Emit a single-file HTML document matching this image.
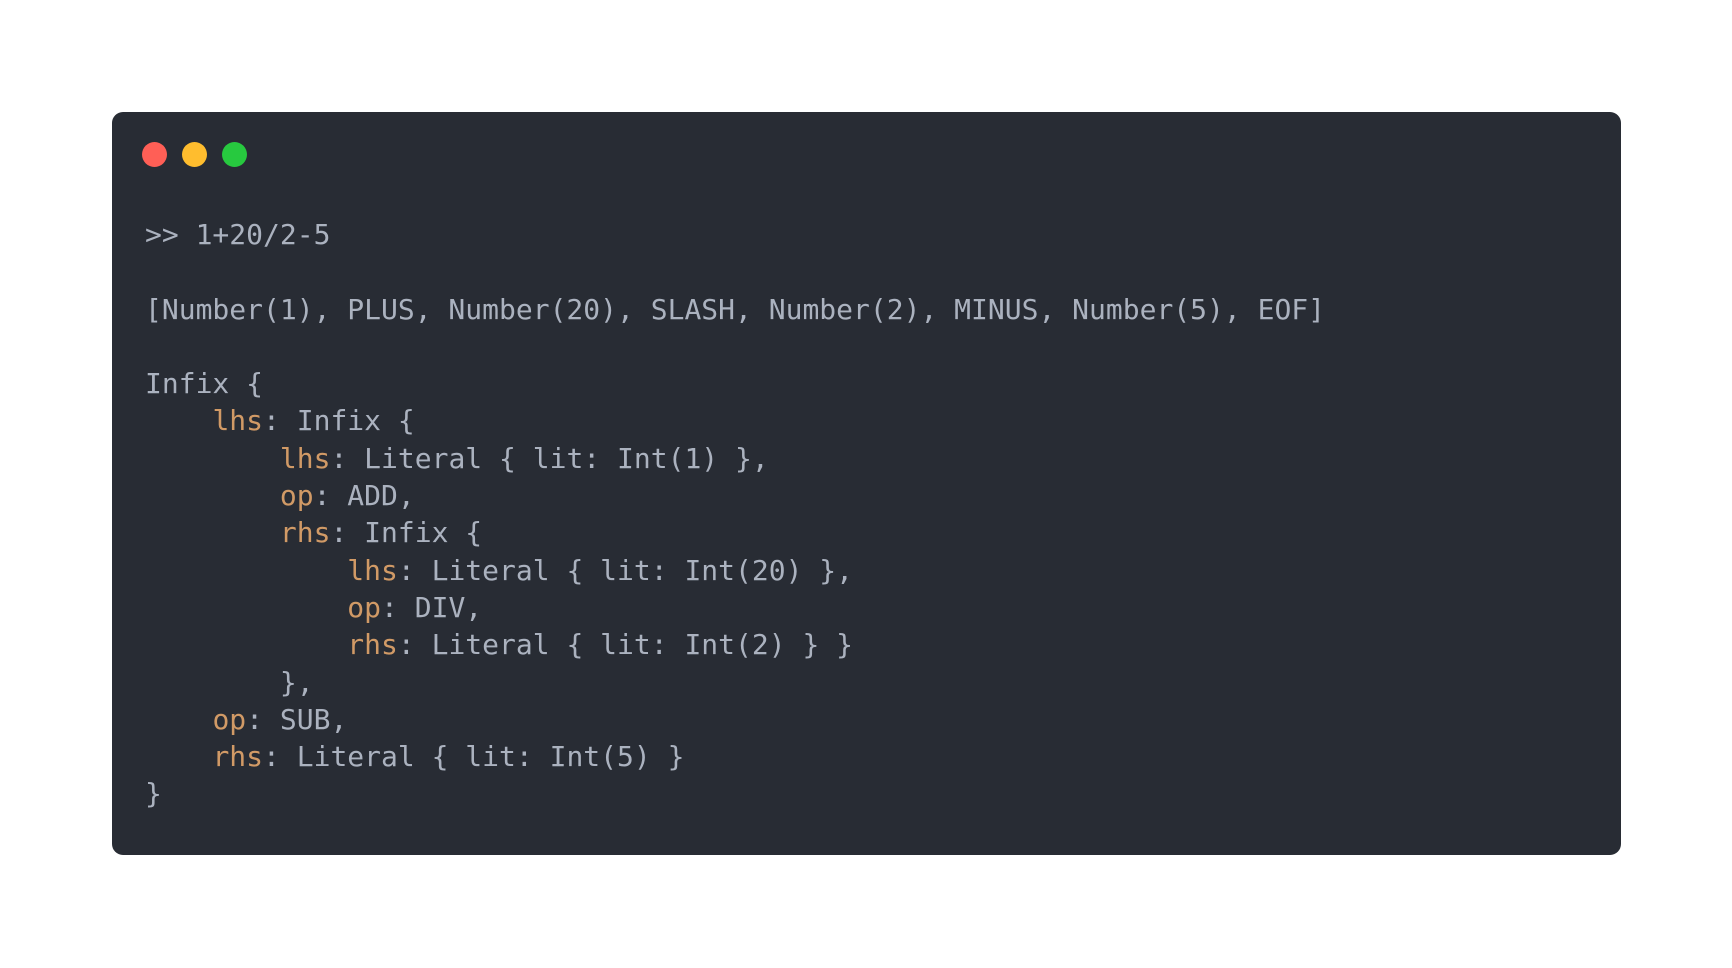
<!DOCTYPE html>
<html><head><meta charset="utf-8"><style>
html,body{margin:0;padding:0;background:#fff;width:1732px;height:968px;overflow:hidden}
.win{position:absolute;left:112px;top:112px;width:1509px;height:743px;background:#282c34;border-radius:11px}
.dot{position:absolute;top:142px;width:25px;height:25px;border-radius:50%}
pre{position:absolute;left:145px;top:216px;margin:0;font-family:"DejaVu Sans Mono","Liberation Mono",monospace;font-size:28px;line-height:37.3px;color:#abb2bf}
.k{color:#d19a66}
</style></head><body>
<div class="win"></div>
<div class="dot" style="left:142px;background:#ff5f56"></div>
<div class="dot" style="left:182px;background:#ffbd2e"></div>
<div class="dot" style="left:222px;background:#27c93f"></div>
<pre>&gt;&gt; 1+20/2-5

[Number(1), PLUS, Number(20), SLASH, Number(2), MINUS, Number(5), EOF]

Infix {
    <span class="k">lhs</span>: Infix {
        <span class="k">lhs</span>: Literal { lit: Int(1) },
        <span class="k">op</span>: ADD,
        <span class="k">rhs</span>: Infix {
            <span class="k">lhs</span>: Literal { lit: Int(20) },
            <span class="k">op</span>: DIV,
            <span class="k">rhs</span>: Literal { lit: Int(2) } }
        },
    <span class="k">op</span>: SUB,
    <span class="k">rhs</span>: Literal { lit: Int(5) }
}</pre>
</body></html>
